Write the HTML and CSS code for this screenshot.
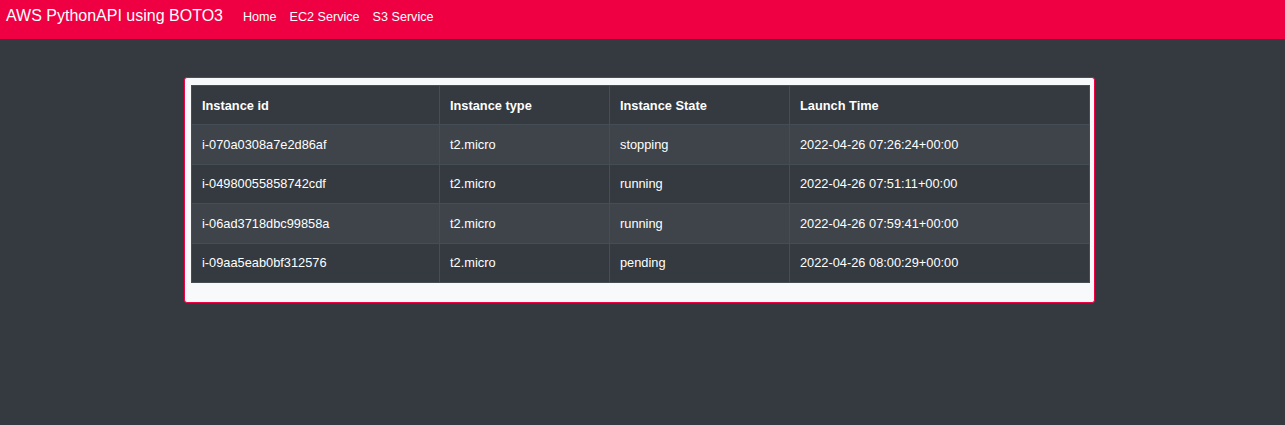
FILE: index.html
```html
<!DOCTYPE html>
<html>
<head>
<meta charset="utf-8">
<link rel="stylesheet" href="styles.css">
</head>
<body>
<nav class="navbar">
  <span class="brand">AWS PythonAPI using BOTO3</span>
  <a class="nav-link" href="#">Home</a>
  <a class="nav-link" href="#">EC2 Service</a>
  <a class="nav-link" href="#">S3 Service</a>
</nav>
<main class="content">
  <div class="card">
    <table class="table">
      <colgroup>
        <col class="c1"><col class="c2"><col class="c3"><col class="c4">
      </colgroup>
      <thead>
        <tr><th>Instance id</th><th>Instance type</th><th>Instance State</th><th>Launch Time</th></tr>
      </thead>
      <tbody>
        <tr><td>i-070a0308a7e2d86af</td><td>t2.micro</td><td>stopping</td><td>2022-04-26 07:26:24+00:00</td></tr>
        <tr><td>i-04980055858742cdf</td><td>t2.micro</td><td>running</td><td>2022-04-26 07:51:11+00:00</td></tr>
        <tr><td>i-06ad3718dbc99858a</td><td>t2.micro</td><td>running</td><td>2022-04-26 07:59:41+00:00</td></tr>
        <tr><td>i-09aa5eab0bf312576</td><td>t2.micro</td><td>pending</td><td>2022-04-26 08:00:29+00:00</td></tr>
      </tbody>
    </table>
  </div>
</main>
</body>
</html>
```
FILE: styles.css
```css
html, body {
  margin: 0;
  padding: 0;
}
body {
  background: #343a40;
  font-family: "Liberation Sans", Arial, sans-serif;
  font-size: 12.8px;
  color: #fff;
  height: 425px;
}
.navbar {
  background: #ee0042;
  height: 39px;
  display: flex;
  align-items: center;
  padding: 0 6px;
  box-sizing: border-box;
}
.brand {
  font-size: 16px;
  color: #fff;
  margin-right: 20px;
  margin-top: -7px;
}
.nav-link {
  color: #fff;
  font-size: 12.6px;
  text-decoration: none;
  margin-right: 13px;
  margin-top: -5px;
}
.content {
  display: flex;
  justify-content: flex-start;
  padding-top: 38px;
  padding-left: 184px;
}
.card {
  width: 911px;
  box-sizing: border-box;
  background: #f8f9fa;
  border: 1px solid #ee0042;
  border-radius: 3px;
  padding: 7px 5px 19px 6px;
}
.table {
  width: 898px;
  border-collapse: collapse;
  table-layout: fixed;
  background: #343a40;
  color: #fff;
}
.c1 { width: 248px; }
.c2 { width: 170px; }
.c3 { width: 180px; }
.c4 { width: 300px; }
.table th, .table td {
  text-align: left;
  border: 1px solid #454d55;
  padding: 0 10px;
  height: 39.4px;
  box-sizing: border-box;
  vertical-align: middle;
}
.table th {
  font-weight: bold;
}
.table tbody tr:nth-child(odd) {
  background: #3e444a;
}
```
